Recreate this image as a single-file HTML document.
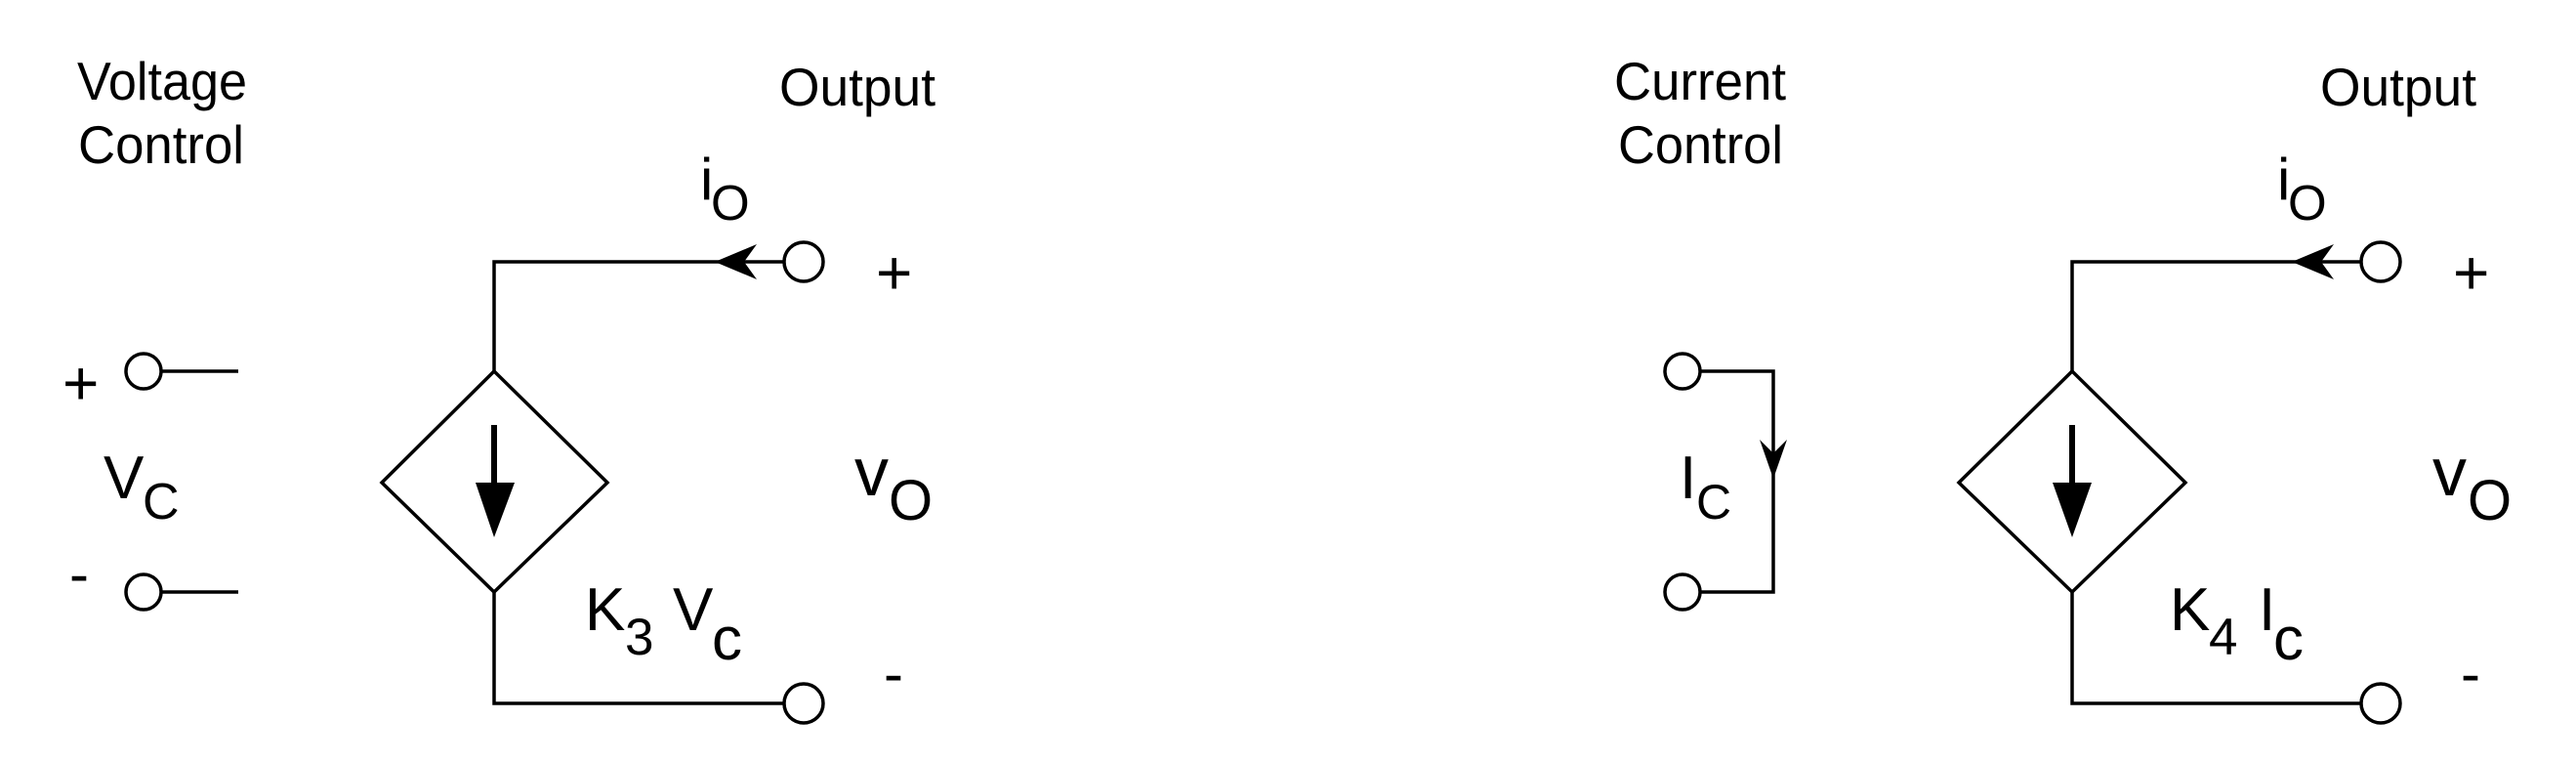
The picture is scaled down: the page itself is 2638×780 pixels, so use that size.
<!DOCTYPE html>
<html><head><meta charset="utf-8"><style>
html,body{margin:0;padding:0;background:#fff;width:2638px;height:780px;overflow:hidden}
svg{display:block}
text{font-family:"Liberation Sans",Arial,sans-serif;fill:#000}
</style></head><body>
<svg width="2638" height="780" viewBox="0 0 2638 780" xmlns="http://www.w3.org/2000/svg">
<g fill="none" stroke="#000" stroke-width="3.5">
<polyline points="803,268 506,268 506,380"/>
<polygon points="506,380 622,494 506,606 391,494"/>
<polyline points="506,606 506,720 803,720"/>
<circle cx="823" cy="268" r="20"/>
<circle cx="823" cy="720" r="20"/>
<circle cx="147" cy="380" r="18"/>
<circle cx="147" cy="606" r="18"/>
<line x1="165" y1="380" x2="244" y2="380"/>
<line x1="165" y1="606" x2="244" y2="606"/>
<line x1="506" y1="435" x2="506" y2="500" stroke-width="6"/>
<polyline points="2418,268 2122,268 2122,380"/>
<polygon points="2122,380 2238,494 2122,606 2006,494"/>
<polyline points="2122,606 2122,720 2418,720"/>
<circle cx="2438" cy="268" r="20"/>
<circle cx="2438" cy="720" r="20"/>
<circle cx="1723" cy="380" r="18"/>
<circle cx="1723" cy="606" r="18"/>
<polyline points="1741,380 1816,380 1816,606 1741,606"/>
<line x1="2122" y1="435" x2="2122" y2="500" stroke-width="6"/>
</g>
<g fill="#000">
<path d="M732,268 L775,250 L762,268 L775,286 Z"/>
<path d="M2347,268 L2390,250 L2377,268 L2390,286 Z"/>
<path d="M487,494 L527,494 L506,550 Z"/>
<path d="M2102,494 L2142,494 L2122,550 Z"/>
<path d="M1816,490 L1802,450 L1816,464 L1830,450 Z"/>
</g>
<g font-size="55">
<text x="79" y="102" textLength="174" lengthAdjust="spacingAndGlyphs">Voltage</text>
<text x="80" y="167" textLength="170" lengthAdjust="spacingAndGlyphs">Control</text>
<text x="798" y="108" textLength="160" lengthAdjust="spacingAndGlyphs">Output</text>
<text x="1653" y="102" textLength="176" lengthAdjust="spacingAndGlyphs">Current</text>
<text x="1657" y="167" textLength="169" lengthAdjust="spacingAndGlyphs">Control</text>
<text x="2376" y="108" textLength="160" lengthAdjust="spacingAndGlyphs">Output</text>
</g>
<g font-size="64">
<text x="64" y="414">+</text>
<text x="71" y="608" font-size="60">-</text>
<text x="897" y="301">+</text>
<text x="905" y="710" font-size="60">-</text>
<text x="2512" y="301">+</text>
<text x="2520" y="710" font-size="60">-</text>
</g>
<g font-size="62">
<text x="717" y="204" font-size="60">i</text><text x="728" y="225" font-size="51">O</text>
<text x="2332" y="204" font-size="60">i</text><text x="2343" y="225" font-size="51">O</text>
<text x="106" y="510">V</text><text x="146" y="531" font-size="52">C</text>
<text x="875" y="507" font-size="70">v</text><text x="910" y="532" font-size="58">O</text>
<text x="2491" y="507" font-size="70">v</text><text x="2527" y="532" font-size="58">O</text>
<text x="1720" y="510">I</text><text x="1737" y="531" font-size="50">C</text>
<text x="599" y="645">K</text><text x="640" y="670" font-size="53">3</text>
<text x="689" y="645">V</text><text x="729" y="675">c</text>
<text x="2222" y="645">K</text><text x="2262" y="670" font-size="53">4</text>
<text x="2313" y="645">I</text><text x="2328" y="675">c</text>
</g>
</svg>
</body></html>
